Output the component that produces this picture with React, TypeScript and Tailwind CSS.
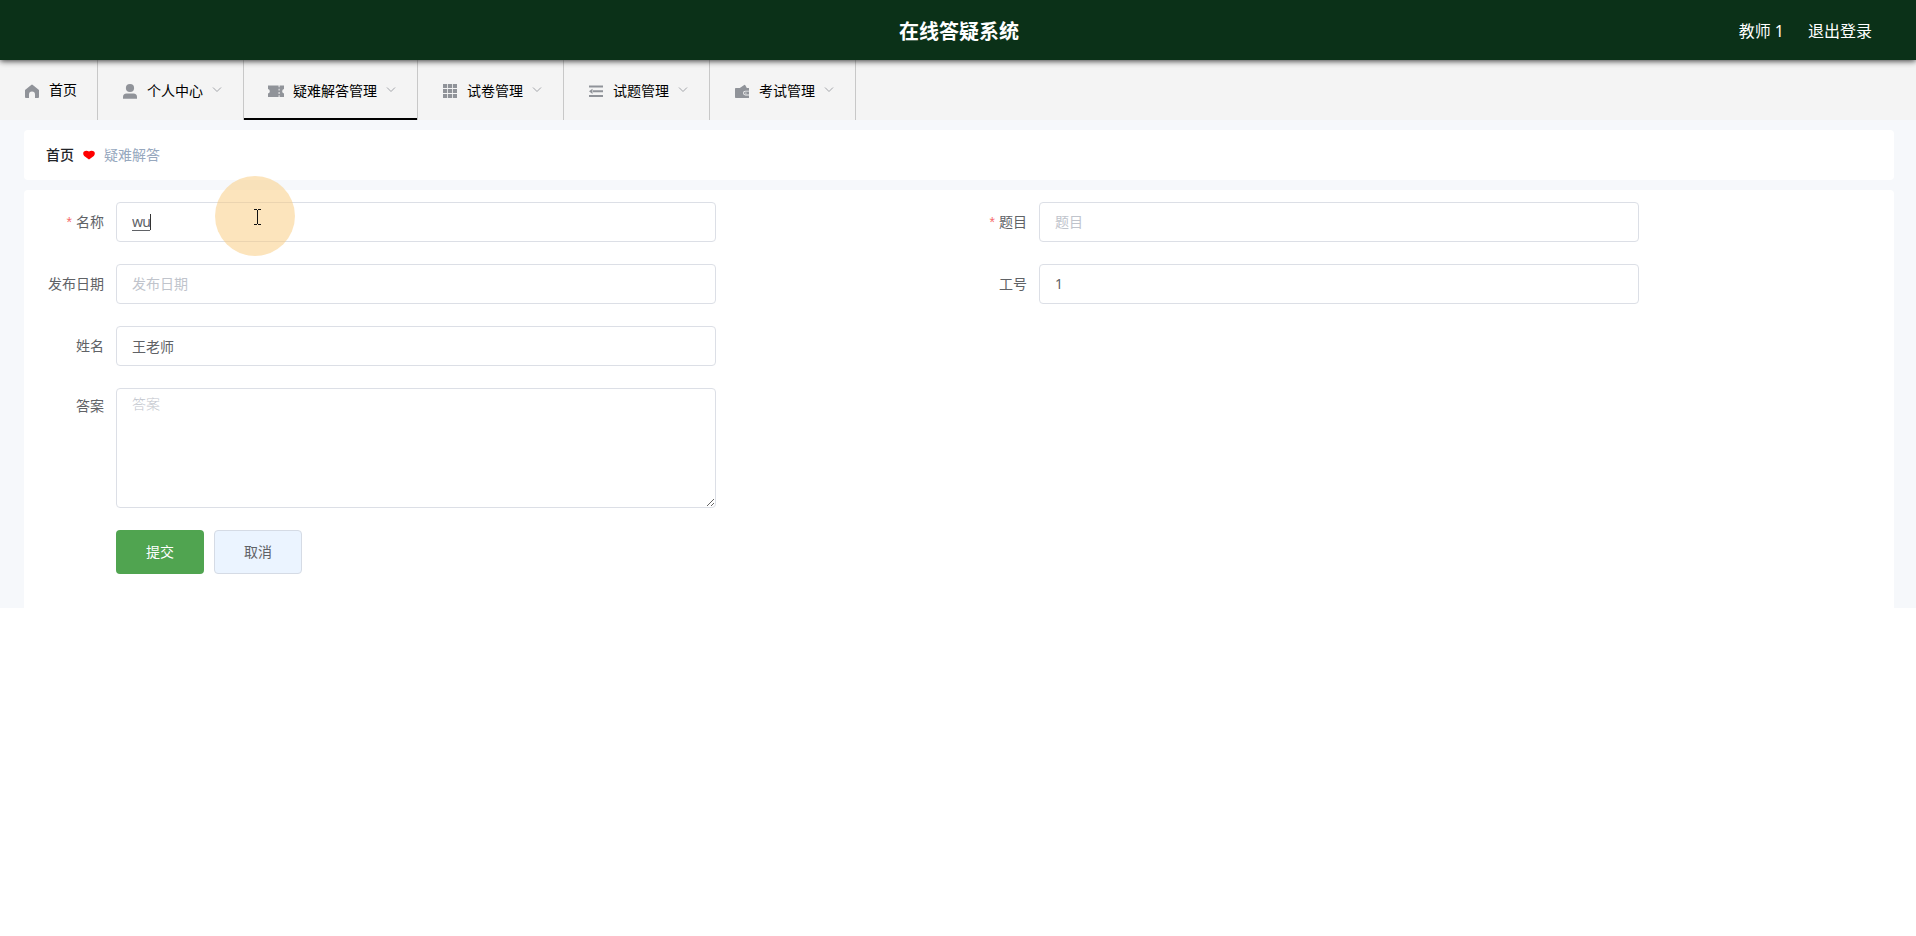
import React, {useState} from "react";
import clsx from "clsx";

interface NavItemInterface {
    id: number,
    label: string,
    icon: React.ReactNode,
    hasChildren: boolean
}

interface FieldProps {
    label: string,
    required?: boolean,
    labelClass?: string,
    children: React.ReactNode
}

interface IconProps {
    children: React.ReactNode
}

const Icon = ({children}: IconProps) => (
    <span className="mr-[5px] flex w-6 justify-center pt-1 text-[#909399]">
        <svg xmlns="http://www.w3.org/2000/svg" viewBox="0 0 18 18" fill="currentColor" className="h-[18px] w-[18px]">
            {children}
        </svg>
    </span>
)

const navItems: NavItemInterface[] = [
    {
        id: 1,
        label: '首页',
        hasChildren: false,
        icon: <Icon><path d="M2 8 8.2 2.900a1.200 1.200 0 0 1 1.600 0L16 8v7.100a.9.9 0 0 1-.9.9h-3.100v-3.500a3 3 0 0 0-6 0V16H2.900a.9.9 0 0 1-.9-.9z"/></Icon>
    },
    {
        id: 2,
        label: '个人中心',
        hasChildren: true,
        icon: <Icon>
            <circle cx="9" cy="6" r="4.1"/>
            <path d="M5.600 11.400h6.800a3.600 3.600 0 0 1 3.600 3.600v1.800H2V15a3.600 3.600 0 0 1 3.600-3.600z"/>
        </Icon>
    },
    {
        id: 3,
        label: '疑难解答管理',
        hasChildren: true,
        icon: <Icon>
            <path d="M1 3.500h10.600v1.800h1V3.500H17v3.500a2.300 2.300 0 0 0 0 4.500V15h-4.400v-1.800h-1V15H1v-3.500A2.300 2.300 0 0 0 1 7zm10.600 3.200v1.900h1V6.700zm0 3.300v1.900h1V10z" fillRule="evenodd"/>
        </Icon>
    },
    {
        id: 4,
        label: '试卷管理',
        hasChildren: true,
        icon: <Icon>
            <path d="M2 2h4.200v4H2zm5 0h4.200v4H7zm5 0h4v4h-4zM2 7h4.200v4H2zm5 0h4.200v4H7zm5 0h4v4h-4zM2 12h4.200v4H2zm5 0h4.200v4H7zm5 0h4v4h-4z"/>
        </Icon>
    },
    {
        id: 5,
        label: '试题管理',
        hasChildren: true,
        icon: <Icon>
            <path d="M2 3.500h14v2H2zM6 8.300h10v2H6zM2 13h14v2H2zM5.500 6.700v5.200L2 9.300z"/>
        </Icon>
    },
    {
        id: 6,
        label: '考试管理',
        hasChildren: true,
        icon: <Icon>
            <path d="M2.800 6h4L11.200 3a.8.8 0 0 1 1.100.3L13.800 6H16v2.800h-3.600a2.300 2.300 0 0 0 0 4.600H16V16H2.800a.8.8 0 0 1-.8-.8V6.800a.8.8 0 0 1 .8-.8z"/>
            <path d="M12.500 9.600H16v3h-3.500a1.500 1.500 0 0 1 0-3zm.4.800a.7.7 0 1 0 0 1.400.7.7 0 0 0 0-1.400z" fillRule="evenodd"/>
        </Icon>
    }
]

const inputClass = "block w-[600px] rounded border border-[#dcdfe6] bg-white px-[15px] text-sm text-[#606266] placeholder:text-[#c0c4cc] outline-none"

const Field = ({label, required = false, labelClass, children}: FieldProps) => (
    <div className="flex">
        <label className={clsx("w-20 shrink-0 pr-3 text-right text-sm whitespace-nowrap text-[#606266]", labelClass ?? "leading-[39px]")}>
            {required && <span className="mr-1 font-['Liberation_Sans'] text-[#f56c6c]">*</span>}
            {label}
        </label>
        {children}
    </div>
)

const Header = () => (
    <header className="relative z-10 flex h-[60px] items-center bg-[#0b3118] pr-11 pl-[46px] text-white shadow-[0_1px_6px_#333]">
        <div className="flex-1"/>
        <h1 className="pt-1 text-xl font-bold">在线答疑系统</h1>
        <div className="flex flex-1 justify-end gap-6 pt-px text-base">
            <span>教师 1</span>
            <span>退出登录</span>
        </div>
    </header>
)

const NavMenu = () => {
    const [activeId, setActiveId] = useState<number>(3)

    return (
        <nav className="flex h-[60px] bg-[#f4f4f4]">
            {navItems.map(item => (
                <button key={item.id}
                        onClick={() => setActiveId(item.id)}
                        className="flex h-[60px] border-r border-[#c8c8c8] text-sm text-black"
                >
                    <span className={clsx("flex h-full items-center border-b-2 px-5", item.id === activeId ? "border-black" : "border-transparent")}>
                        {item.icon}
                        <span className={item.hasChildren ? "pt-[3px]" : "pt-px"}>{item.label}</span>
                        {item.hasChildren && (
                            <svg viewBox="0 0 12 12" fill="none" stroke="#a3a5aa" className="ml-2 h-3 w-3">
                                <path d="m2 4.500 4 4 4-4"/>
                            </svg>
                        )}
                    </span>
                </button>
            ))}
        </nav>
    )
}

const Breadcrumb = () => (
    <div className="flex h-[50px] items-center rounded bg-white pl-[22px] text-sm">
        <span className="font-medium text-[#222428]">首页</span>
        <svg viewBox="0 0 12 10" fill="#ff0000" className="mr-[9px] ml-[9px] h-[10px] w-3">
            <path d="M6 9.400 1.200 6C-.1 4.800-.1 2.400 1 1.500 2.300.500 4.600.600 6 1.500 7.400.600 9.700.500 11 1.500c1.100.900 1.100 3.300-.200 4.500z"/>
        </svg>
        <span className="text-[#97a8be]">疑难解答</span>
    </div>
)

const App = () => {
    const [name, setName] = useState<string>('wu')

    return (
        <div className="min-h-screen bg-white font-['Noto_Sans','Noto_Sans_CJK_SC',sans-serif]">
            <Header/>
            <NavMenu/>

            <main className="flex h-[488px] flex-col gap-2.5 bg-[#f6f8fb] pt-2.5 pr-[22px] pl-6">
                <Breadcrumb/>

                <form className="flex-1 rounded-t bg-white px-3 pt-3">
                    <div className="grid grid-cols-2 gap-y-[22px]">
                        <Field label="名称" required>
                            <div className="relative">
                                <input value={name}
                                       onChange={event => setName(event.target.value)}
                                       className={clsx(inputClass, "h-10 pb-0.5 tracking-[-0.8px] underline underline-offset-3")}
                                />
                                {/* text caret */}
                                <span className="absolute top-3 left-[34px] h-4 w-px bg-[#333]"/>
                                {/* pointer highlight */}
                                <span className="absolute -top-[26px] left-[99px] h-20 w-20 rounded-full bg-[#f9c97a]/50"/>
                                <svg viewBox="0 0 7 16" fill="none" stroke="#111" className="absolute top-[7px] left-[138px] h-4 w-[7px]">
                                    <path d="M0 .5h3M4 .5h3M3.500 1v14M0 15.500h3M4 15.500h3"/>
                                </svg>
                            </div>
                        </Field>
                        <Field label="题目" required>
                            <input placeholder="题目" className={clsx(inputClass, "h-10 pb-0.5")}/>
                        </Field>
                        <Field label="发布日期">
                            <input placeholder="发布日期" className={clsx(inputClass, "h-10 pb-0.5")}/>
                        </Field>
                        <Field label="工号">
                            <input defaultValue="1" className={clsx(inputClass, "h-10 pb-0.5")}/>
                        </Field>
                        <div className="col-span-2">
                            <Field label="姓名">
                                <input defaultValue="王老师" className={clsx(inputClass, "h-10")}/>
                            </Field>
                        </div>
                        <div className="col-span-2">
                            <Field label="答案" labelClass="leading-9">
                                <textarea placeholder="答案" className={clsx(inputClass, "h-[120px] resize-y py-1 leading-[21px] font-light")}/>
                            </Field>
                        </div>
                    </div>

                    <div className="mt-[22px] flex gap-2.5 pl-20 text-sm">
                        <button type="button" className="h-11 w-[88px] rounded bg-[#50a450] text-white">
                            提交
                        </button>
                        <button type="button" className="h-11 w-[88px] rounded border border-[#d5dbe5] bg-[#ebf4ff] text-[#606266]">
                            取消
                        </button>
                    </div>
                </form>
            </main>
        </div>
    )
}
export default App
